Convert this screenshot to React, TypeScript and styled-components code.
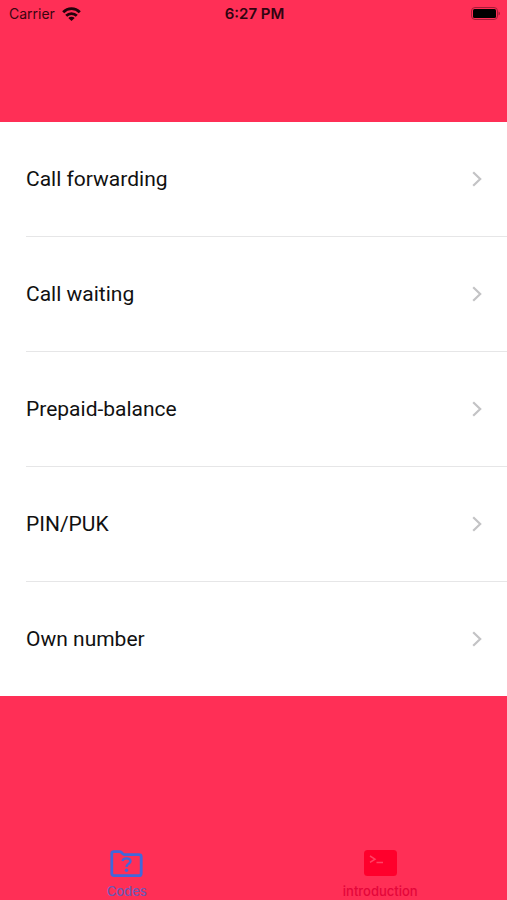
import React from "react";
import styled, { createGlobalStyle } from "styled-components";

const GlobalStyle = createGlobalStyle`
  * { box-sizing: border-box; }
  body {
    margin: 0;
    background: #ff2f56;
    font-family: Inter, "Liberation Sans", sans-serif;
  }
`;

const Screen = styled.div`
  display: flex;
  flex-direction: column;
  min-height: 100vh;
  background: #ff2f56;
`;

const StatusBar = styled.header`
  display: grid;
  grid-template-columns: 1fr auto 1fr;
  align-items: center;
  height: 28px;
  padding: 0 7px 0 9px;
  margin-bottom: 94px;
  color: #3a0510;
  font-size: 14px;
  line-height: 20px;
`;

const Network = styled.div`
  display: flex;
  align-items: center;
  gap: 7px;
`;

const Clock = styled.time`
  color: #300410;
  font-size: 15px;
  font-weight: 600;
`;

const Battery = styled.svg`
  justify-self: end;
`;

const List = styled.ul`
  margin: 0;
  padding: 0 0 0 26px;
  list-style: none;
  background: #fff;
`;

const Item = styled.li`
  & + & {
    border-top: 1px solid #e6e6e7;
  }
`;

const ItemLink = styled.a`
  display: flex;
  align-items: center;
  justify-content: space-between;
  height: 114px;
  padding-right: 25px;
  color: #111;
  font-family: Roboto, "Liberation Sans", sans-serif;
  font-size: 21px;
  line-height: 28px;
  text-decoration: none;
`;

const TabBar = styled.nav`
  display: grid;
  grid-template-columns: 1fr 1fr;
  margin-top: auto;
`;

const Tab = styled.button<{ $color: string }>`
  display: flex;
  flex-direction: column;
  align-items: center;
  gap: 4px;
  padding: 0;
  border: 0;
  background: none;
  color: ${({ $color }) => $color};
  font-family: inherit;
  font-size: 13px;
  font-weight: 500;
  line-height: 18px;
  cursor: pointer;
`;

const codes = ["Call forwarding", "Call waiting", "Prepaid-balance", "PIN/PUK", "Own number"];

const WifiIcon = () => (
  <svg width="19" height="15" viewBox="0 0 19 15" fill="none" stroke="#24020b" strokeWidth="2.8" aria-hidden="true">
    <path d="M1.2 5.2C5.8 0.5 13.2 0.5 17.8 5.2" />
    <path d="M4.2 8.8C7.2 5.9 11.8 5.9 14.8 8.8" />
    <path d="M9.5 14 6.3 11C8.2 9.4 10.8 9.4 12.7 11Z" fill="#24020b" stroke="none" />
  </svg>
);

const Chevron = () => (
  <svg width="10" height="16" viewBox="0 0 10 16" fill="none" stroke="#c3c3c5" strokeWidth="2.2" aria-hidden="true">
    <path d="M1.2 1.2 8.2 8 1.2 14.8" />
  </svg>
);

const FolderIcon = () => (
  <svg width="33" height="28" viewBox="0 0 33 28" fill="none" stroke="#4068dc" aria-hidden="true">
    <path
      d="M1.8 23.4V3.6Q1.8 1.6 3.8 1.6H9.5Q10.6 1.6 11.4 2.4L13 4Q13.8 4.6 15 4.6H29Q31.2 4.6 31.2 6.6V23.4Q31.2 25.6 29 25.6H4Q1.8 25.6 1.8 23.4Z"
      strokeWidth="2.8"
    />
    <path d="M12.6 11.2C12.8 9 14.4 8.4 16.5 8.4C18.8 8.4 20.5 9.5 20.5 11.3C20.5 14 16.5 13.6 16.5 17" strokeWidth="2.4" />
    <circle cx="16.5" cy="20.2" r="1.7" fill="#4068dc" stroke="none" />
  </svg>
);

const TerminalIcon = () => (
  <svg width="33" height="28" viewBox="0 0 33 28" fill="none" aria-hidden="true">
    <rect width="33" height="26" rx="3.5" fill="#ff002c" />
    <path d="M6 6 11 9.2 6 12.4M12.5 12.6H19" stroke="#ff4264" strokeWidth="1.5" />
  </svg>
);

export default function App() {
  return (
    <>
      <GlobalStyle />
      <Screen>
        <StatusBar>
          <Network>
            <span>Carrier</span>
            <WifiIcon />
          </Network>
          <Clock>6:27 PM</Clock>
          <Battery width="30" height="14" viewBox="0 0 30 14" role="img" aria-label="Battery full">
            <rect x="1.5" y="0.5" width="26" height="12" rx="3.5" fill="none" stroke="#a41c37" />
            <rect x="3" y="2" width="23" height="9" rx="1.5" fill="#000" />
            <path d="M28.5 4.5Q30 5 30 6.5Q30 8 28.5 8.5Z" fill="#a41c37" />
          </Battery>
        </StatusBar>
        <main>
          <List>
            {codes.map((name) => (
              <Item key={name}>
                <ItemLink href="#">
                  <span>{name}</span>
                  <Chevron />
                </ItemLink>
              </Item>
            ))}
          </List>
        </main>
        <TabBar>
          <Tab type="button" $color="#7058b4">
            <FolderIcon />
            Codes
          </Tab>
          <Tab type="button" $color="#e4063a">
            <TerminalIcon />
            introduction
          </Tab>
        </TabBar>
      </Screen>
    </>
  );
}
